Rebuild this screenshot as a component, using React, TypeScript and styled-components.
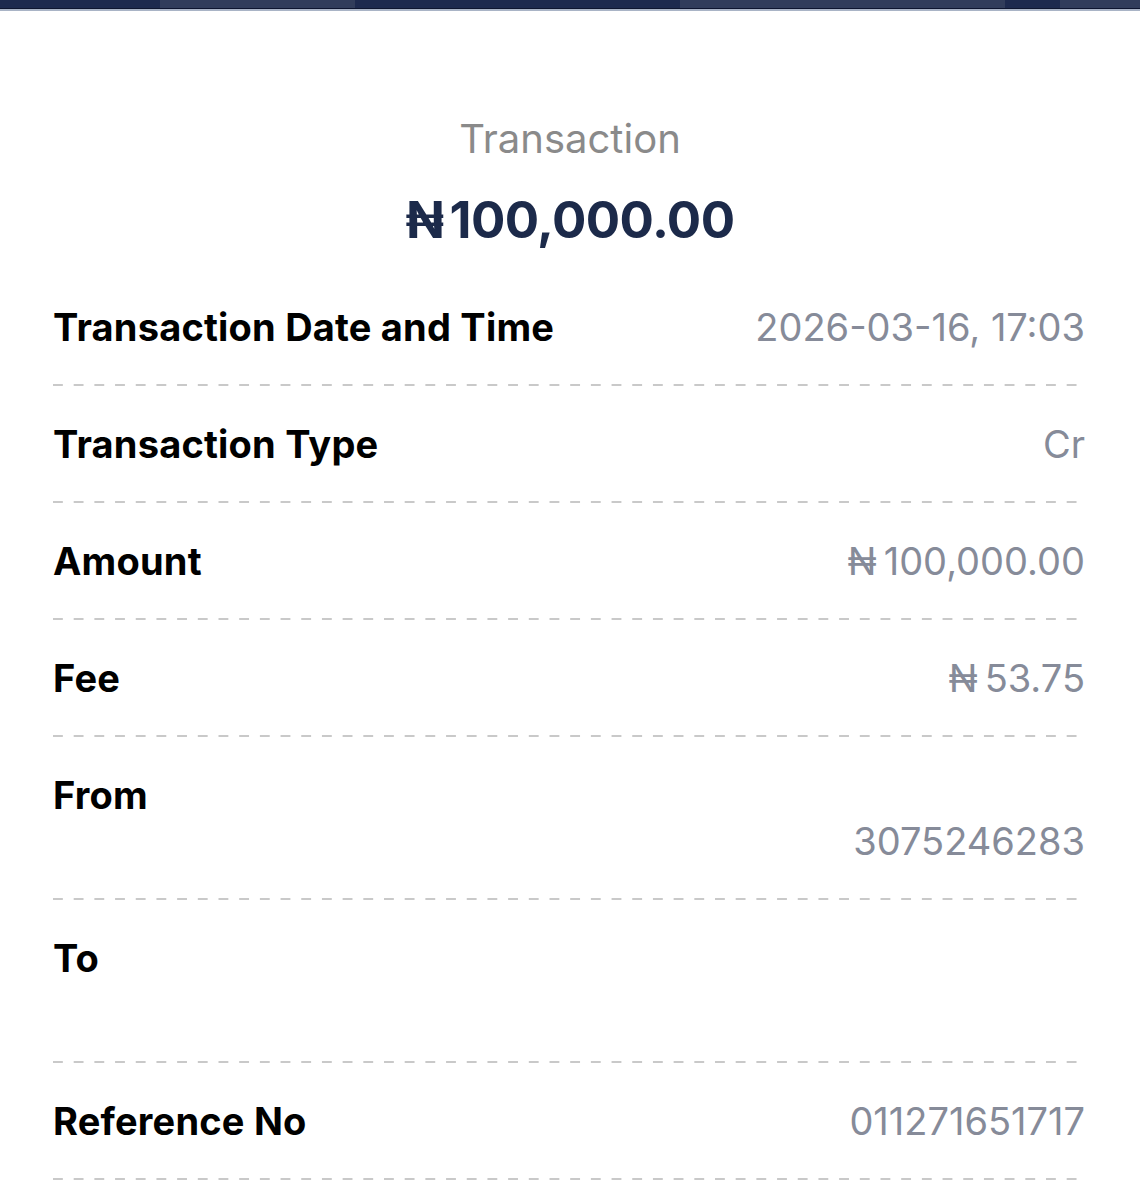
import React from "react"
import styled, { createGlobalStyle } from "styled-components"

interface Detail {
  readonly label: string
  readonly value: string
  readonly stacked?: boolean
}

const details: readonly Detail[] = [
  { label: "Transaction Date and Time", value: "2026-03-16, 17:03" },
  { label: "Transaction Type", value: "Cr" },
  { label: "Amount", value: "₦\u2009100,000.00" },
  { label: "Fee", value: "₦\u200953.75" },
  { label: "From", value: "3075246283", stacked: true },
  { label: "To", value: "", stacked: true },
  { label: "Reference No", value: "011271651717" },
]

const shades = [
  { w: 160, light: false },
  { w: 195, light: true },
  { w: 325, light: false },
  { w: 325, light: true },
  { w: 55, light: false },
  { w: 80, light: true },
]

export default () => (
  <>
    <GlobalStyle />
    <StyledPage>
      <StyledTopBar>
        {shades.map((s, i) => (
          <StyledShade key={i} $light={s.light} style={{ flexBasis: s.w }} />
        ))}
      </StyledTopBar>
      <StyledHeader>
        <StyledTitle>Transaction</StyledTitle>
        <StyledTotal>
          <StyledNaira>₦</StyledNaira>100,000.00
        </StyledTotal>
      </StyledHeader>
      <StyledList>
        {details.map(d => (
          <StyledRow key={d.label} $stacked={!!d.stacked}>
            <StyledLabel>{d.label}</StyledLabel>
            <StyledValue>{d.value || "\u00a0"}</StyledValue>
          </StyledRow>
        ))}
      </StyledList>
    </StyledPage>
  </>
)

const GlobalStyle = createGlobalStyle`
  body {
    margin: 0;
    background: #ffffff;
    font-family: "Inter", "Noto Sans", sans-serif;
  }
`

const StyledPage = styled.div`
  width: 1140px;
  min-height: 1200px;
  background: #ffffff;
`

const StyledTopBar = styled.div`
  display: flex;
  height: 8px;
  border-bottom: 1px solid #0e1630;
  box-shadow: 0 2px 0 #a9b4c6;
`

const StyledShade = styled.div<{ $light: boolean }>`
  flex-shrink: 0;
  background: ${props => (props.$light ? "#313d5b" : "#1d2a4e")};
`

const StyledHeader = styled.header`
  display: flex;
  flex-direction: column;
  align-items: center;
  padding-top: 107px;
`

const StyledTitle = styled.h1`
  margin: 0;
  font-size: 40px;
  line-height: 46px;
  font-weight: 400;
  color: #8a8a8a;
`

const StyledTotal = styled.div`
  margin-top: 28px;
  font-size: 51px;
  line-height: 60px;
  font-weight: 700;
  color: #1c2a4a;
  letter-spacing: -0.6px;
`

const StyledNaira = styled.span`
  margin-right: 6px;
`

const StyledList = styled.div`
  display: flex;
  flex-direction: column;
  padding: 19px 55px 0 53px;
`

const StyledRow = styled.div<{ $stacked: boolean }>`
  display: flex;
  flex-direction: ${props => (props.$stacked ? "column" : "row")};
  justify-content: space-between;
  align-items: ${props => (props.$stacked ? "stretch" : "center")};
  padding: 35px 0 36px;
  background-image: linear-gradient(to right, #c9c9c9 0 10px, transparent 10px 20.7px);
  background-size: 20.7px 2px;
  background-repeat: repeat-x;
  background-position: left bottom;
  margin-right: 6px;
`

const StyledLabel = styled.div`
  font-size: 38px;
  line-height: 46px;
  font-weight: 700;
  color: #000000;
  letter-spacing: 0.2px;
`

const StyledValue = styled.div`
  font-size: 38px;
  line-height: 46px;
  font-weight: 400;
  color: #868b99;
  text-align: right;
  margin-right: -6px;
`
